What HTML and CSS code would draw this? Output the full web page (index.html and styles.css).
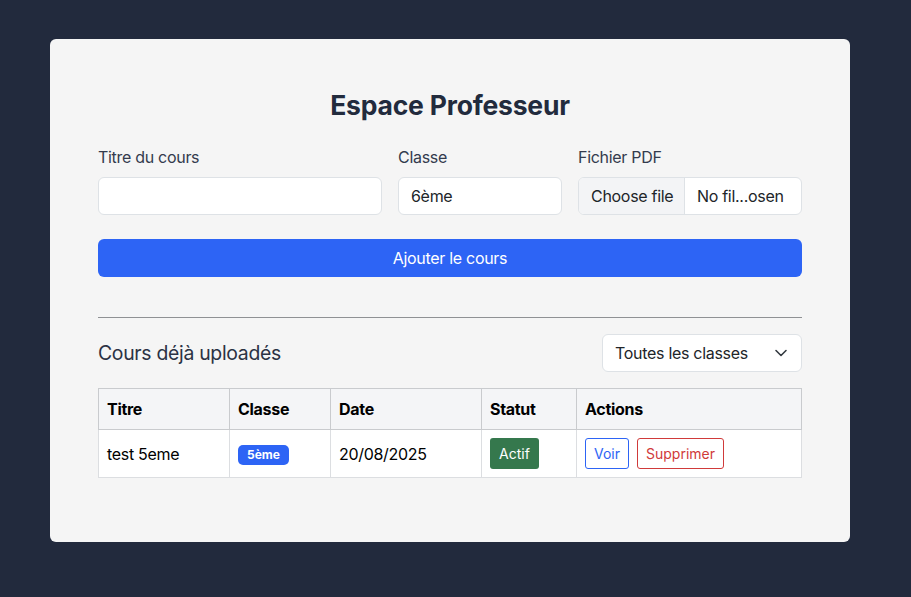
FILE: index.html
```html
<!DOCTYPE html>
<html lang="fr">
<head>
<meta charset="utf-8">
<title>Espace Professeur</title>
<link rel="stylesheet" href="styles.css">
</head>
<body>
<main class="card">
  <h1 class="title">Espace Professeur</h1>
  <form class="form-grid">
    <div class="field">
      <label class="label">Titre du cours</label>
      <div class="input"></div>
    </div>
    <div class="field">
      <label class="label">Classe</label>
      <div class="input">6ème</div>
    </div>
    <div class="field">
      <label class="label">Fichier PDF</label>
      <div class="file-input">
        <span class="file-btn">Choose file</span>
        <span class="file-name">No fil...osen</span>
      </div>
    </div>
  </form>
  <button class="btn-primary" type="button">Ajouter le cours</button>
  <hr class="divider">
  <div class="list-head">
    <h2 class="subtitle">Cours déjà uploadés</h2>
    <div class="select">
      <span>Toutes les classes</span>
      <svg width="16" height="16" viewBox="0 0 16 16"><path d="M3 5.5l5 5 5-5" fill="none" stroke="#343a40" stroke-width="1.6" stroke-linecap="round" stroke-linejoin="round"/></svg>
    </div>
  </div>
  <table class="table">
    <thead>
      <tr>
        <th class="c1">Titre</th>
        <th class="c2">Classe</th>
        <th class="c3">Date</th>
        <th class="c4">Statut</th>
        <th>Actions</th>
      </tr>
    </thead>
    <tbody>
      <tr>
        <td>test 5eme</td>
        <td><span class="badge">5ème</span></td>
        <td>20/08/2025</td>
        <td><span class="status">Actif</span></td>
        <td><span class="actions"><span class="btn-sm btn-outline-blue">Voir</span><span class="btn-sm btn-outline-red">Supprimer</span></span></td>
      </tr>
    </tbody>
  </table>
</main>
</body>
</html>
```
FILE: styles.css
```css
* { box-sizing: border-box; }
html, body { margin: 0; padding: 0; }
body {
  background: #222a3d;
  font-family: Inter, "Noto Sans", sans-serif;
  color: #212529;
  letter-spacing: -0.3px;
  padding: 39px 61px 55px 50px;
  min-height: 597px;
}
.card {
  width: 800px;
  background: #f5f5f5;
  border-radius: 6px;
  padding: 48px 48px 64px;
}
.title {
  margin: 0 0 22px;
  text-align: center;
  font-size: 26.5px;
  font-weight: 700;
  color: #222b3d;
  line-height: 36px;
  letter-spacing: -0.2px;
}
.form-grid {
  display: grid;
  grid-template-columns: 284px 164px 224px;
  column-gap: 16px;
  margin: 0 0 24px;
}
.field { display: flex; flex-direction: column; }
.label {
  font-size: 16px;
  color: #333b4d;
  line-height: 24px;
  margin-bottom: 8px;
}
.input {
  height: 38px;
  background: #fff;
  border: 1px solid #dee2e6;
  border-radius: 6px;
  padding: 0 12px;
  font-size: 16px;
  line-height: 36px;
  color: #212529;
}
.file-input {
  height: 38px;
  display: flex;
  background: #fff;
  border: 1px solid #dee2e6;
  border-radius: 6px;
  overflow: hidden;
  font-size: 16px;
  line-height: 36px;
  color: #212529;
}
.file-btn {
  flex: 0 0 106px;
  background: #f3f4f6;
  border-right: 1px solid #dee2e6;
  padding: 0 0 0 12px;
  white-space: nowrap;
}
.file-name { padding: 0 12px; white-space: nowrap; }
.btn-primary {
  display: block;
  width: 100%;
  height: 38px;
  border: 0;
  border-radius: 6px;
  background: #2d64f5;
  color: #fff;
  font-family: inherit;
  font-size: 16px;
  letter-spacing: -0.3px;
}
.divider {
  margin: 40px 0 16px;
  border: 0;
  border-top: 1px solid #8f9194;
}
.list-head {
  display: flex;
  justify-content: space-between;
  align-items: center;
  margin-bottom: 16px;
}
.subtitle {
  margin: 0;
  font-size: 19.4px;
  font-weight: 400;
  color: #2b3244;
}
.select {
  width: 200px;
  height: 38px;
  display: flex;
  justify-content: space-between;
  align-items: center;
  background: #fff;
  border: 1px solid #dee2e6;
  border-radius: 6px;
  padding: 0 12px;
  font-size: 16px;
  color: #212529;
}
.table {
  width: 100%;
  border-collapse: collapse;
  font-size: 16px;
  background: #fff;
}
.table th, .table td {
  border: 1px solid #c9cbce;
  padding: 8px;
  text-align: left;
  vertical-align: middle;
}
.table thead th {
  background: #f4f5f7;
  font-weight: 700;
  color: #000;
  height: 41px;
}
.table tbody td { height: 48px; color: #000; border-color: #dcdee1; }
.c1 { width: 131px; }
.c2 { width: 101px; }
.c3 { width: 151px; }
.c4 { width: 95px; }
.badge {
  display: inline-block;
  background: #2d64f5;
  color: #fff;
  font-size: 12px;
  font-weight: 700;
  border-radius: 5px;
  padding: 2px 9px;
  line-height: 16px;
  letter-spacing: 0;
}
.status {
  display: inline-block;
  background: #35784d;
  color: #fff;
  font-size: 14px;
  border-radius: 3px;
  padding: 0 9px;
  line-height: 31px;
  letter-spacing: 0;
}
.actions { display: flex; gap: 8px; }
.btn-sm {
  display: inline-block;
  font-size: 14px;
  border-radius: 3px;
  padding: 0 8px;
  line-height: 29px;
  background: #fff;
  letter-spacing: 0;
}
.btn-outline-blue { border: 1px solid #2d64f5; color: #2d64f5; }
.btn-outline-red { border: 1px solid #d03a3a; color: #d03a3a; }
```
